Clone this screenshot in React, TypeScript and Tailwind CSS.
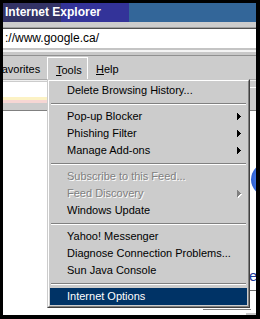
import React from "react";

type Item =
  | { kind: "item"; label: string; arrow?: boolean; disabled?: boolean; active?: boolean }
  | { kind: "sep" };

const items: Item[] = [
  { kind: "item", label: "Delete Browsing History..." },
  { kind: "sep" },
  { kind: "item", label: "Pop-up Blocker", arrow: true },
  { kind: "item", label: "Phishing Filter", arrow: true },
  { kind: "item", label: "Manage Add-ons", arrow: true },
  { kind: "sep" },
  { kind: "item", label: "Subscribe to this Feed...", disabled: true },
  { kind: "item", label: "Feed Discovery", arrow: true, disabled: true },
  { kind: "item", label: "Windows Update" },
  { kind: "sep" },
  { kind: "item", label: "Yahoo! Messenger" },
  { kind: "item", label: "Diagnose Connection Problems..." },
  { kind: "item", label: "Sun Java Console" },
  { kind: "sep" },
  { kind: "item", label: "Internet Options", active: true },
];

const Arrow = ({ color }: { color: string }) => (
  <svg width="4" height="7" viewBox="0 0 4 7" className="block">
    <path d="M0 0h1v1h1v1h1v1h1v1h-1v1h-1v1h-1v1h-1z" fill={color} />
  </svg>
);

const ToolsMenu = () => (
  <div className="absolute left-[44px] top-[76px] w-[203px] border border-t-[#cccccc] border-l-[#cccccc] border-r-[#404040] border-b-[#404040] bg-[#cccccc]">
    <div className="border border-t-white border-l-white border-r-[#808080] border-b-[#808080] p-px">
      {items.map((it, i) =>
        it.kind === "sep" ? (
          <div key={i} className="h-[9px] pt-[4px] px-px">
            <div className="h-px bg-[#808080]" />
            <div className="h-px bg-white" />
          </div>
        ) : (
          <div
            key={i}
            className={`h-[17px] flex items-center justify-between pl-[17px] pr-[6px] ${
              it.active ? "bg-[#003366] text-white" : "text-black"
            }`}
          >
            <span
              className={`whitespace-nowrap leading-[17px] ${
                it.disabled ? "text-[#808080] [text-shadow:1px_1px_0_#ffffff]" : ""
              }`}
            >
              {it.label}
            </span>
            {it.arrow && (
              <span className="relative">
                {it.disabled && (
                  <span className="absolute left-px top-px">
                    <Arrow color="#ffffff" />
                  </span>
                )}
                <span className="relative">
                  <Arrow color={it.disabled ? "#808080" : "#000000"} />
                </span>
              </span>
            )}
          </div>
        )
      )}
    </div>
  </div>
);

export default function App() {
  return (
    <div className="w-[260px] h-[319px] bg-black pt-[3px] pl-[3px] pr-[4px] pb-[4px] font-['Liberation_Sans',Arial,sans-serif] text-[11px]">
      <div className="relative w-[253px] h-[312px] bg-white overflow-hidden flex flex-col">
        {/* title bar */}
        <div className="h-[19px] shrink-0 pl-[2px] bg-[linear-gradient(to_right,#333366_0,#333366_58px,#333399_58px,#333399_126px,#336699_126px)]">
          <span className="text-white font-bold text-[12px] leading-[19px]">Internet Explorer</span>
        </div>
        <div className="h-[5px] shrink-0 bg-[#cccccc]" />
        <div className="h-px shrink-0 bg-[#a0a0a0]" />
        <div className="h-px shrink-0 bg-[#505050]" />

        {/* address */}
        <div className="h-[19px] shrink-0 pl-[2px] bg-white">
          <span className="text-[12px] leading-[19px] text-black">://www.google.ca/</span>
        </div>
        <div className="h-[2px] shrink-0 bg-[#c4c4c4]" />
        <div className="h-[2px] shrink-0 bg-[#f4f4f4]" />
        <div className="h-[3px] shrink-0 bg-[#c8c8c8]" />
        <div className="h-px shrink-0 bg-[#909090]" />

        {/* menu bar */}
        <div className="h-[23px] shrink-0 bg-[#cccccc] flex items-end">
          <div className="w-[44px] h-[22px] shrink-0 flex items-center pt-[3px]">
            <span className="ml-[-8px] whitespace-nowrap">Favorites</span>
          </div>
          <div className="w-[41px] h-[22px] shrink-0 flex items-center pt-[3px] pl-[8px] border-t border-l border-r border-white">
            <span>
              <span className="underline underline-offset-[1px]">T</span>ools
            </span>
          </div>
          <div className="h-[22px] flex items-center pt-[3px] ml-[8px]">
            <span>
              <span className="underline underline-offset-[1px]">H</span>elp
            </span>
          </div>
        </div>
        <div className="h-px shrink-0 bg-[#a8a8a8]" />
        <div className="h-px shrink-0 bg-[#f0f0f0]" />

        {/* toolbar strip behind the menu */}
        <div className="h-[29px] shrink-0 flex">
          <div className="flex-1 flex flex-col">
            <div className="h-px bg-[#cccccc]" />
            <div className="h-[15px] bg-white" />
            <div className="h-[3px] bg-[#fcf2c4]" />
            <div className="h-[3px] bg-[#f6d6d4]" />
            <div className="flex-1 bg-[#cccccc]" />
          </div>
          <div className="w-[6px] flex flex-col bg-[#cccccc]">
            <div className="h-[6px]" />
            <div className="h-px bg-white" />
          </div>
        </div>
        <div className="h-px shrink-0 bg-[#808080]" />

        {/* page */}
        <div className="flex-1 bg-white" />

        <div className="absolute left-[248px] top-[160px] w-[36px] h-[33px] rounded-full bg-[radial-gradient(circle_at_70%_50%,#9cc0ff_0,#4f86ee_55%,#1c48c0_100%)]" />
        <span className="absolute left-[246px] top-[265px] text-[15px] leading-none text-[#1a3a9a]">e</span>
        <div className="absolute left-[247px] top-[287px] w-[6px] h-px bg-[#707070]" />
        <div className="absolute left-[200px] top-[306px] w-[48px] h-px bg-[#808080]" />
        <div className="absolute left-[243px] top-[310px] w-[10px] h-[2px] bg-[#c8c8c8]" />

        <ToolsMenu />
      </div>
    </div>
  );
}
